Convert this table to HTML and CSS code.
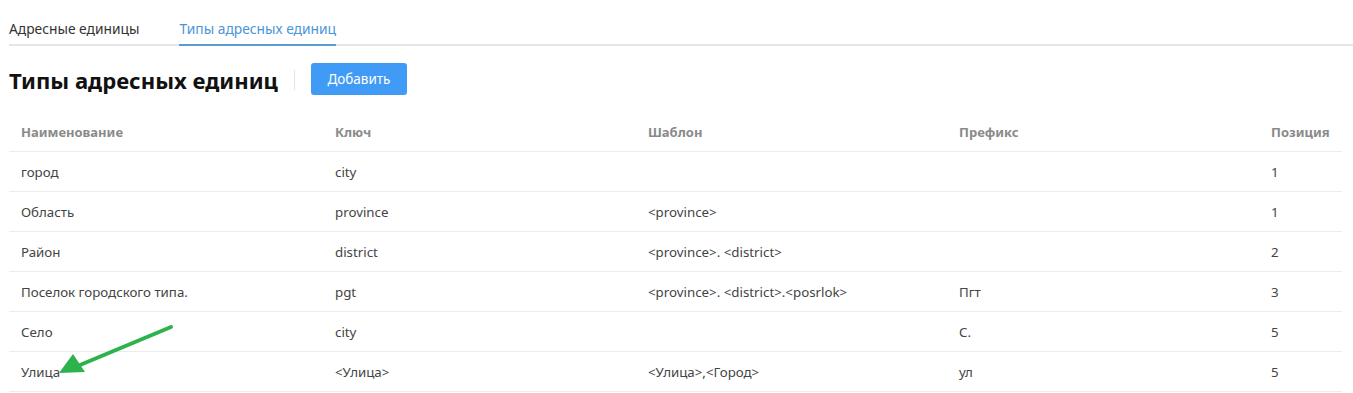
FILE: index.html
```html
<!DOCTYPE html>
<html lang="ru">
<head>
<meta charset="utf-8">
<link rel="stylesheet" href="styles.css">
</head>
<body>
<div class="page">
  <nav class="tabs">
    <a class="tab">Адресные единицы</a>
    <a class="tab active">Типы адресных единиц</a>
  </nav>
  <div class="titlebar">
    <h1 class="title">Типы адресных единиц</h1>
    <span class="divider"></span>
    <button class="btn">Добавить</button>
  </div>
  <div class="table">
    <div class="row head">
      <div class="cell">Наименование</div>
      <div class="cell">Ключ</div>
      <div class="cell">Шаблон</div>
      <div class="cell">Префикс</div>
      <div class="cell">Позиция</div>
    </div>
    <div class="row">
      <div class="cell">город</div>
      <div class="cell">city</div>
      <div class="cell"></div>
      <div class="cell"></div>
      <div class="cell">1</div>
    </div>
    <div class="row">
      <div class="cell">Область</div>
      <div class="cell">province</div>
      <div class="cell">&lt;province&gt;</div>
      <div class="cell"></div>
      <div class="cell">1</div>
    </div>
    <div class="row">
      <div class="cell">Район</div>
      <div class="cell">district</div>
      <div class="cell">&lt;province&gt;. &lt;district&gt;</div>
      <div class="cell"></div>
      <div class="cell">2</div>
    </div>
    <div class="row">
      <div class="cell">Поселок городского типа.</div>
      <div class="cell">pgt</div>
      <div class="cell">&lt;province&gt;. &lt;district&gt;.&lt;posrlok&gt;</div>
      <div class="cell">Пгт</div>
      <div class="cell">3</div>
    </div>
    <div class="row">
      <div class="cell">Село</div>
      <div class="cell">city</div>
      <div class="cell"></div>
      <div class="cell">С.</div>
      <div class="cell">5</div>
    </div>
    <div class="row">
      <div class="cell">Улица</div>
      <div class="cell">&lt;Улица&gt;</div>
      <div class="cell">&lt;Улица&gt;,&lt;Город&gt;</div>
      <div class="cell">ул</div>
      <div class="cell">5</div>
    </div>
  </div>
</div>
<svg class="arrow" width="200" height="80" viewBox="0 0 200 80">
  <line x1="171" y1="12" x2="80" y2="50" stroke="#2eb24c" stroke-width="4" stroke-linecap="round"/>
  <polygon points="59,58 73,39 85,57" fill="#2eb24c"/>
</svg>
</body>
</html>
```
FILE: styles.css
```css
* { box-sizing: border-box; }
html, body { margin: 0; padding: 0; background: #fff; }
body {
  font-family: "Noto Sans", "Open Sans", sans-serif;
  font-size: 13.3px;
  color: #444;
  position: relative;
  width: 1353px;
  height: 393px;
  overflow: hidden;
}
.page { padding: 0 0 0 9px; }
.tabs {
  display: flex;
  gap: 40px;
  height: 46px;
  border-bottom: 2px solid #e6e6e6;
  align-items: stretch;
}
.tab {
  display: flex;
  align-items: center;
  padding-top: 12px;
  color: #333;
  font-size: 13.8px;
  margin-bottom: -2px;
  border-bottom: 2px solid transparent;
}
.tab.active {
  color: #4a95d8;
  border-bottom-color: #5a9bd6;
}
.titlebar {
  display: flex;
  align-items: center;
  height: 32px;
  margin-top: 17px;
  margin-bottom: 17px;
}
.title {
  margin: 0;
  font-size: 22.1px;
  font-weight: 700;
  color: #111;
  line-height: 32px;
  padding-top: 2px;
}
.divider {
  width: 1px;
  height: 20px;
  background: #e3e3e3;
  margin: 2px 16px 0 16px;
}
.btn {
  height: 32px;
  width: 96px;
  border: 0;
  border-radius: 3px;
  background: #3f9bf6;
  color: #fff;
  font-family: inherit;
  font-size: 13.5px;
}
.table { width: 1333px; }
.row {
  display: grid;
  grid-template-columns: 314px 313px 311px 312px 1fr;
  height: 40px;
  border-bottom: 1px solid #ececec;
  align-items: center;
}
.cell { padding: 0 12px; white-space: nowrap; }
.head .cell { font-weight: 700; color: #8a8a8a; font-size: 13px; }
.arrow {
  position: absolute;
  left: 0;
  top: 315px;
}
```
